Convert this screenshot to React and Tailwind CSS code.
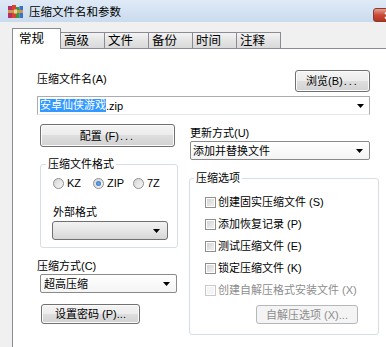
import React from "react";

function Arrow() {
  return (
    <svg width="7" height="4" viewBox="0 0 7 4" className="shrink-0">
      <path d="M0 0H7L3.5 4Z" fill="#000" />
    </svg>
  );
}

function Check({ disabled }) {
  return (
    <span
      className={
        disabled
          ? "w-[11px] h-[11px] shrink-0 border border-[#c9c9c9] bg-[#f4f4f4] shadow-[inset_0_0_0_1px_#fff]"
          : "w-[11px] h-[11px] shrink-0 border border-[#8e8f8f] bg-[linear-gradient(135deg,#d0d0d0,#f4f4f4)] shadow-[inset_0_0_0_1px_#fff]"
      }
    />
  );
}

function Radio({ on, label, w }) {
  return (
    <div className={"flex items-center gap-[3px] " + w}>
      <span className="w-[11px] h-[11px] rounded-full border border-[#8e8f8f] bg-[linear-gradient(135deg,#d4d4d4,#f8f8f8)] flex items-center justify-center shrink-0">
        {on ? (
          <span className="w-[5px] h-[5px] rounded-full bg-[radial-gradient(circle,#6fb0ef,#1f5fb8)]" />
        ) : null}
      </span>
      <span>{label}</span>
    </div>
  );
}

const btn =
  "flex items-center justify-center rounded-[3px] border border-[#707070] bg-[linear-gradient(#f4f4f4_0%,#ececec_49%,#dedede_50%,#d2d2d2_100%)] shadow-[inset_0_0_0_1px_#fbfbfb]";

export default function App() {
  const checks = [
    ["创建固实压缩文件 (S)", false],
    ["添加恢复记录 (P)", false],
    ["测试压缩文件 (E)", false],
    ["锁定压缩文件 (K)", false],
    ["创建自解压格式安装文件 (X)", true],
  ];
  return (
    <div className="w-[386px] h-[347px] overflow-hidden bg-[#f0f0f0] flex flex-col text-[11px] leading-[14px] text-black font-['Liberation_Sans','Noto_Sans_CJK_SC',sans-serif]">
      {/* title bar */}
      <div className="h-[22px] shrink-0 flex items-start bg-[linear-gradient(#dfeaf6,#cadbee)]">
        <svg width="15" height="14" viewBox="0 0 15 14" className="ml-[8px] mt-[5px] shrink-0">
          <rect x="0" y="1" width="4" height="12" fill="#b0306a" />
          <rect x="4" y="0" width="4" height="13" fill="#d8452e" />
          <rect x="8" y="2" width="3.5" height="11" fill="#3a9a3a" />
          <rect x="11.5" y="1" width="3.5" height="12" fill="#3c6fd0" />
          <rect x="0" y="5" width="15" height="3" fill="#c89a4a" />
          <rect x="6" y="4.5" width="3" height="4" fill="#e8d8a0" />
        </svg>
        <span className="ml-[6px] mt-[5px] text-[11.5px] leading-[14px]">压缩文件名和参数</span>
        <div className="ml-auto mt-[8px] mr-[-17px] w-[30px] h-[14px] shrink-0 rounded-[3px] border border-[#8a3a30] bg-[linear-gradient(#e8a090,#c94a38_50%,#b8321f)] flex items-center justify-center">
          <svg width="8" height="7" viewBox="0 0 8 7">
            <path d="M1 0.5L7 6.5M7 0.5L1 6.5" stroke="#fff" strokeWidth="1.8" />
          </svg>
        </div>
      </div>

      {/* tabs + panel */}
      <div className="flex-1 flex flex-col pl-[12px] pt-[6px]">
        <div className="flex items-end h-[20px] shrink-0">
          <div className="relative z-10 mb-[-1px] w-[49px] h-[21px] bg-white border border-b-0 border-[#898c95] pl-[6px] pt-[2px] text-[12.5px] leading-[16px]">
            常规
          </div>
          {["高级", "文件", "备份", "时间", "注释"].map((t) => (
            <div
              key={t}
              className="w-[44px] h-[16px] border-t border-r border-[#898c95] bg-[linear-gradient(#f3f3f3,#e4e4e4_50%,#d9d9d9)] pl-[3px] text-[12.5px] leading-[16px]"
            >
              {t}
            </div>
          ))}
        </div>

        <div className="flex-1 border-l border-t border-[#898c95] bg-white pl-[24px]">
          {/* row 1 */}
          <div className="mt-[21px] w-[333px] h-[22px] flex justify-between items-start">
            <span className="pt-[2px]">压缩文件名(A)</span>
            <div className={btn + " w-[75px] h-[22px]"}>
              浏览(B)<span className="tracking-[2px] ml-[1px]">...</span>
            </div>
          </div>

          {/* filename combo */}
          <div className="mt-[4px] w-[333px] h-[19px] border border-[#abadb3] border-b-[#e3e9ef] bg-white flex items-center pl-[2px] pr-[3px]">
            <span className="bg-[#3399ff] text-white leading-[13px]">安卓仙侠游戏</span>
            <span>.zip</span>
            <span className="ml-auto mr-[2px]">
              <Arrow />
            </span>
          </div>

          {/* columns */}
          <div className="flex">
            {/* left */}
            <div className="w-[141px] flex flex-col items-start">
              <div className={btn + " ml-[3px] mt-[9px] w-[135px] h-[23px]"}>
                配置 (F)<span className="tracking-[2px] ml-[1px]">...</span>
              </div>

              <fieldset className="ml-[3px] mt-[10px] w-[138px] border border-[#d5dfe5] rounded-[3px] pl-[11px] pb-[7px]">
                <legend className="ml-[-6px] px-[2px] leading-[14px]">压缩文件格式</legend>
                <div className="mt-[5px] flex items-center h-[14px] pl-[1px]">
                  <Radio label="KZ" w="w-[40px]" />
                  <Radio label="ZIP" on w="w-[40px]" />
                  <Radio label="7Z" w="w-[30px]" />
                </div>
                <div className="mt-[15px] pl-[1px]">外部格式</div>
                <div className="mt-[2px] w-[116px] h-[19px] rounded-[3px] border border-[#707070] bg-[linear-gradient(#f2f2f2,#e6e6e6_50%,#d6d6d6)] flex items-center justify-end pr-[7px]">
                  <Arrow />
                </div>
              </fieldset>

              <div className="mt-[11px]">压缩方式(C)</div>
              <div className="ml-[3px] mt-[1px] w-[137px] h-[19px] rounded-[2px] border border-[#8a8a8a] bg-[linear-gradient(#ffffff,#f4f4f4)] flex items-center pl-[3px] pr-[6px]">
                <span>超高压缩</span>
                <span className="ml-auto">
                  <Arrow />
                </span>
              </div>

              <div className={btn + " ml-[4px] mt-[11px] w-[99px] h-[20px]"}>设置密码 (P)...</div>
            </div>

            {/* right */}
            <div className="ml-[11px] w-[190px] flex flex-col items-start">
              <div className="mt-[11px] pl-[1px]">更新方式(U)</div>
              <div className="ml-[1px] mt-[1px] w-[180px] h-[19px] rounded-[2px] border border-[#8a8a8a] bg-[linear-gradient(#ffffff,#f4f4f4)] flex items-center pl-[2px] pr-[6px]">
                <span>添加并替换文件</span>
                <span className="ml-auto">
                  <Arrow />
                </span>
              </div>

              <fieldset className="mt-[11px] w-[190px] border border-[#d5dfe5] rounded-[3px] pl-[15px] pb-[10px]">
                <legend className="ml-[-11px] px-[2px] leading-[14px]">压缩选项</legend>
                <div className="mt-[10px] flex flex-col gap-[8px]">
                  {checks.map(([t, d]) => (
                    <div key={t} className={"flex items-center gap-[2px] h-[14px] " + (d ? "text-[#8d8d8d]" : "")}>
                      <Check disabled={d} />
                      <span>{t}</span>
                    </div>
                  ))}
                </div>
                <div className="ml-[51px] mt-[8px] w-[102px] h-[19px] rounded-[3px] border border-[#b5b8bb] bg-[#f4f4f4] text-[#8d8d8d] flex items-center justify-center">
                  自解压选项 (X)...
                </div>
              </fieldset>
            </div>
          </div>
        </div>
      </div>
    </div>
  );
}
